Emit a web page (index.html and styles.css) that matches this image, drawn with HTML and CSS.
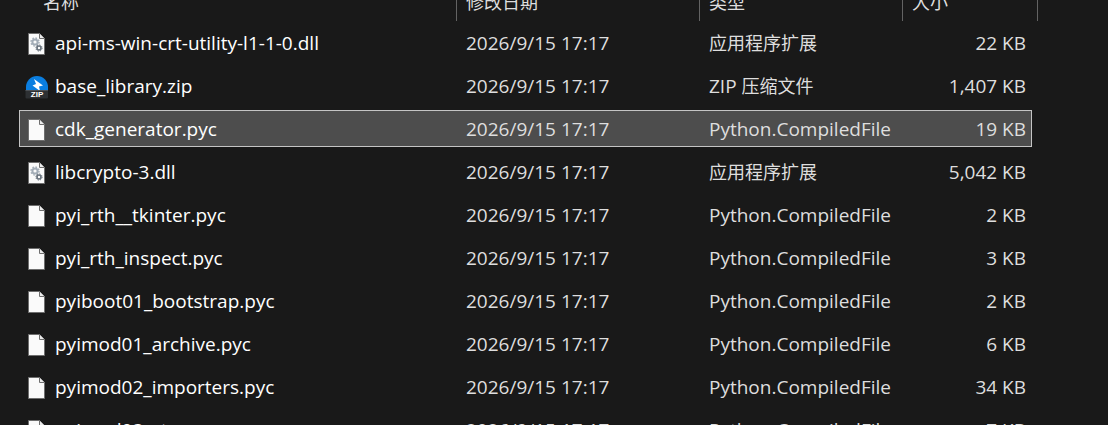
FILE: index.html
```html
<!DOCTYPE html>
<html lang="zh-CN">
<head>
<meta charset="utf-8">
<title>文件列表</title>
<link rel="stylesheet" href="styles.css">
</head>
<body>
<svg class="defs" aria-hidden="true">
  <symbol id="file" viewBox="0 0 24 24">
    <path d="M4.5 1.5h11l5 5v16h-16z" fill="#fafafa" stroke="#6e6e6e"/>
    <path d="M15.5 1.5v5h5" fill="#ececec" stroke="#6e6e6e"/>
  </symbol>
  <symbol id="dll" viewBox="0 0 24 24">
    <use href="#file"/>
    <circle cx="11" cy="10" r="2.6" fill="none" stroke="#a3adb7" stroke-width="2"/>
    <circle cx="11" cy="10" r="4" fill="none" stroke="#a3adb7" stroke-width="1.4" stroke-dasharray="1.6 1.54"/>
    <circle cx="15" cy="16" r="2" fill="#fafafa" stroke="#67717b" stroke-width="1.6"/>
    <circle cx="15" cy="16" r="3.1" fill="none" stroke="#67717b" stroke-width="1" stroke-dasharray="1.3 1.13"/>
  </symbol>
</svg>
<main class="pane">
  <table class="files">
    <colgroup><col><col class="col-date"><col class="col-type"><col class="col-size"></colgroup>
    <thead>
      <tr><th class="first">名称</th><th>修改日期</th><th>类型</th><th>大小</th></tr>
    </thead>
    <tbody>
      <tr><td class="name"><svg class="icon"><use href="#dll"/></svg>api-ms-win-crt-utility-l1-1-0.dll</td><td>2026/9/15 17:17</td><td><span class="cjk">应用程序扩展</span></td><td class="size">22 KB</td></tr>
      <tr><td class="name"><svg class="icon" viewBox="0 0 24 24">
        <path d="M2 15V12a11 11 0 0 1 22 0v3z" fill="#0a7ee0"/>
        <path d="M10 4l2 5-3.500 1.500 7.500 5.500-1-4.500 4-1z" fill="#fff"/>
        <path d="M1.500 15h22.500v7.500q0 1-1 1H2.500q-1 0-1-1z" fill="#2d3033"/>
        <path d="M1.500 15.500H24" stroke="#4b4f54"/>
        <text x="13" y="22" text-anchor="middle" class="zip-label">ZIP</text>
      </svg>base_library.zip</td><td>2026/9/15 17:17</td><td>ZIP <span class="cjk">压缩文件</span></td><td class="size">1,407 KB</td></tr>
      <tr class="selected"><td class="name"><svg class="icon"><use href="#file"/></svg>cdk_generator.pyc</td><td>2026/9/15 17:17</td><td>Python.CompiledFile</td><td class="size">19 KB</td></tr>
      <tr><td class="name"><svg class="icon"><use href="#dll"/></svg>libcrypto-3.dll</td><td>2026/9/15 17:17</td><td><span class="cjk">应用程序扩展</span></td><td class="size">5,042 KB</td></tr>
      <tr><td class="name"><svg class="icon"><use href="#file"/></svg>pyi_rth__tkinter.pyc</td><td>2026/9/15 17:17</td><td>Python.CompiledFile</td><td class="size">2 KB</td></tr>
      <tr><td class="name"><svg class="icon"><use href="#file"/></svg>pyi_rth_inspect.pyc</td><td>2026/9/15 17:17</td><td>Python.CompiledFile</td><td class="size">3 KB</td></tr>
      <tr><td class="name"><svg class="icon"><use href="#file"/></svg>pyiboot01_bootstrap.pyc</td><td>2026/9/15 17:17</td><td>Python.CompiledFile</td><td class="size">2 KB</td></tr>
      <tr><td class="name"><svg class="icon"><use href="#file"/></svg>pyimod01_archive.pyc</td><td>2026/9/15 17:17</td><td>Python.CompiledFile</td><td class="size">6 KB</td></tr>
      <tr><td class="name"><svg class="icon"><use href="#file"/></svg>pyimod02_importers.pyc</td><td>2026/9/15 17:17</td><td>Python.CompiledFile</td><td class="size">34 KB</td></tr>
      <tr><td class="name"><svg class="icon"><use href="#file"/></svg>pyimod03_ctypes.pyc</td><td>2026/9/15 17:17</td><td>Python.CompiledFile</td><td class="size">7 KB</td></tr>
    </tbody>
  </table>
</main>
</body>
</html>
```
FILE: styles.css
```css
body {
  margin: 0;
  background: #191919;
  color: #dedede;
  font-family: "Open Sans", "Noto Sans CJK SC", sans-serif;
  font-size: 19px;
  line-height: 36px;
}

.defs {
  position: absolute;
  width: 0;
  height: 0;
}

.pane {
  height: 100vh;
  overflow: hidden;
}

/* The list is scrolled so that its header is partly out of view. */
.files {
  width: calc(100% - 95px);
  margin: -20px 76px 0 19px;
  table-layout: fixed;
  border-collapse: separate;
  border-spacing: 0 6px;
  white-space: nowrap;
}

.col-date { width: 243px; }
.col-type { width: 203px; }
.col-size { width: 129px; }

th {
  position: relative;
  height: 32px;
  padding: 0 0 0 9px;
  font-size: 18px;
  font-weight: 400;
  line-height: 32px;
  text-align: left;
}

th.first { padding-left: 24px; }

th::after {
  content: "";
  position: absolute;
  top: 0;
  right: 0;
  bottom: -3px;
  width: 1px;
  background: #636363;
}

th:last-child::after { right: -6px; }

td {
  height: 37px;
  padding: 0 0 0 9px;
}

.name {
  padding-left: 5px;
  color: #fff;
}

.size {
  padding: 0 6px 0 0;
  text-align: right;
}

.cjk {
  font-family: "Noto Sans CJK SC", sans-serif;
  font-size: 18px;
}

.icon {
  width: 24px;
  height: 24px;
  margin-right: 7px;
  vertical-align: middle;
}

.selected {
  background: #4d4d4d;
  outline: 1px solid #c4c4c4;
  outline-offset: -1px;
}

.zip-label {
  fill: #fff;
  font: bold 8px "Liberation Sans", sans-serif;
}
```
